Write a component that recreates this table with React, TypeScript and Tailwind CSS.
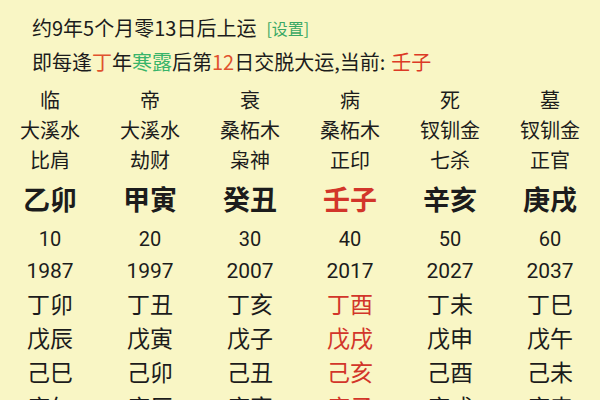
import React from "react";

const FONT = { fontFamily: '"Noto Sans CJK SC", "Noto Sans", sans-serif' };
const NUM = { fontFamily: 'Roboto, "Noto Sans CJK SC", sans-serif' };

type Cell = { t: string; red?: boolean };

function Row({ cells, h, cls, num }: { cells: Cell[]; h: string; cls: string; num?: boolean }) {
  return (
    <div className={`grid grid-cols-6 ${h} items-center shrink-0`}>
      {cells.map((c, i) => (
        <div
          key={i}
          style={num ? NUM : FONT}
          className={`text-center leading-none ${cls} ${c.red ? "text-[#d2352a]" : "text-[#1c1c1c]"}`}
        >
          {c.t}
        </div>
      ))}
    </div>
  );
}

const mk = (arr: string[], redIdx = -1): Cell[] => arr.map((t, i) => ({ t, red: i === redIdx }));

export default function App() {
  return (
    <div className="w-[600px] h-[400px] overflow-hidden bg-[#f9f6c5] flex flex-col" style={FONT}>
      <div className="h-[13px] shrink-0" />
      <div className="h-[30px] shrink-0 flex items-center pl-[32px] text-[20px] text-[#1c1c1c] leading-none">
        <span>约9年5个月零13日后上运</span>
        <span className="ml-[10px] text-[16px] text-[#3aa864]">[设置]</span>
      </div>
      <div className="h-[37px] shrink-0 flex items-center pl-[32px] text-[20px] text-[#1c1c1c] leading-none">
        <span>即每逢</span>
        <span className="text-[#e0522e]">丁</span>
        <span>年</span>
        <span className="text-[#38b46a]">寒露</span>
        <span>后第</span>
        <span className="text-[#e0522e]">12</span>
        <span>日交脱大运,当前: </span>
        <span className="ml-[6px] text-[#dc3a26]">壬子</span>
      </div>
      <div className="h-[5px] shrink-0" />
      <Row h="h-[30px]" cls="text-[20px]" cells={mk(["临", "帝", "衰", "病", "死", "墓"])} />
      <Row h="h-[30px]" cls="text-[20px]" cells={mk(["大溪水", "大溪水", "桑柘木", "桑柘木", "钗钏金", "钗钏金"])} />
      <Row h="h-[30px]" cls="text-[20px]" cells={mk(["比肩", "劫财", "枭神", "正印", "七杀", "正官"])} />
      <Row h="h-[47px]" cls="text-[27px] font-bold" cells={mk(["乙卯", "甲寅", "癸丑", "壬子", "辛亥", "庚戌"], 3)} />
      <Row h="h-[34px]" cls="text-[20px]" num cells={mk(["10", "20", "30", "40", "50", "60"])} />
      <Row h="h-[30px]" cls="text-[21px]" num cells={mk(["1987", "1997", "2007", "2017", "2027", "2037"])} />
      <Row h="h-[34px]" cls="text-[23px]" cells={mk(["丁卯", "丁丑", "丁亥", "丁酉", "丁未", "丁巳"], 3)} />
      <Row h="h-[34px]" cls="text-[23px]" cells={mk(["戊辰", "戊寅", "戊子", "戊戌", "戊申", "戊午"], 3)} />
      <Row h="h-[35px]" cls="text-[23px]" cells={mk(["己巳", "己卯", "己丑", "己亥", "己酉", "己未"], 3)} />
      <Row h="h-[34px]" cls="text-[23px]" cells={mk(["庚午", "庚辰", "庚寅", "庚子", "庚戌", "庚申"], 3)} />
    </div>
  );
}
